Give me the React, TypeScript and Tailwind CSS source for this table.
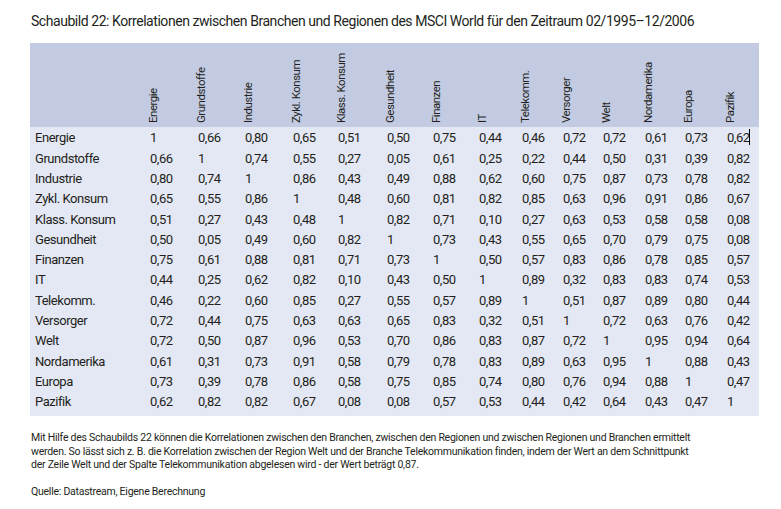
const cols = [
  "Energie",
  "Grundstoffe",
  "Industrie",
  "Zykl. Konsum",
  "Klass. Konsum",
  "Gesundheit",
  "Finanzen",
  "IT",
  "Telekomm.",
  "Versorger",
  "Welt",
  "Nordamerika",
  "Europa",
  "Pazifik",
];

const rows: Array<[string, string[]]> = [
  ["Energie", ["1", "0,66", "0,80", "0,65", "0,51", "0,50", "0,75", "0,44", "0,46", "0,72", "0,72", "0,61", "0,73", "0,62"]],
  ["Grundstoffe", ["0,66", "1", "0,74", "0,55", "0,27", "0,05", "0,61", "0,25", "0,22", "0,44", "0,50", "0,31", "0,39", "0,82"]],
  ["Industrie", ["0,80", "0,74", "1", "0,86", "0,43", "0,49", "0,88", "0,62", "0,60", "0,75", "0,87", "0,73", "0,78", "0,82"]],
  ["Zykl. Konsum", ["0,65", "0,55", "0,86", "1", "0,48", "0,60", "0,81", "0,82", "0,85", "0,63", "0,96", "0,91", "0,86", "0,67"]],
  ["Klass. Konsum", ["0,51", "0,27", "0,43", "0,48", "1", "0,82", "0,71", "0,10", "0,27", "0,63", "0,53", "0,58", "0,58", "0,08"]],
  ["Gesundheit", ["0,50", "0,05", "0,49", "0,60", "0,82", "1", "0,73", "0,43", "0,55", "0,65", "0,70", "0,79", "0,75", "0,08"]],
  ["Finanzen", ["0,75", "0,61", "0,88", "0,81", "0,71", "0,73", "1", "0,50", "0,57", "0,83", "0,86", "0,78", "0,85", "0,57"]],
  ["IT", ["0,44", "0,25", "0,62", "0,82", "0,10", "0,43", "0,50", "1", "0,89", "0,32", "0,83", "0,83", "0,74", "0,53"]],
  ["Telekomm.", ["0,46", "0,22", "0,60", "0,85", "0,27", "0,55", "0,57", "0,89", "1", "0,51", "0,87", "0,89", "0,80", "0,44"]],
  ["Versorger", ["0,72", "0,44", "0,75", "0,63", "0,63", "0,65", "0,83", "0,32", "0,51", "1", "0,72", "0,63", "0,76", "0,42"]],
  ["Welt", ["0,72", "0,50", "0,87", "0,96", "0,53", "0,70", "0,86", "0,83", "0,87", "0,72", "1", "0,95", "0,94", "0,64"]],
  ["Nordamerika", ["0,61", "0,31", "0,73", "0,91", "0,58", "0,79", "0,78", "0,83", "0,89", "0,63", "0,95", "1", "0,88", "0,43"]],
  ["Europa", ["0,73", "0,39", "0,78", "0,86", "0,58", "0,75", "0,85", "0,74", "0,80", "0,76", "0,94", "0,88", "1", "0,47"]],
  ["Pazifik", ["0,62", "0,82", "0,82", "0,67", "0,08", "0,08", "0,57", "0,53", "0,44", "0,42", "0,64", "0,43", "0,47", "1"]],
];

// column track widths measured from the scan
const grid =
  "grid grid-cols-[120px_48px_47px_48px_45px_49px_46px_46px_43px_41px_40px_42px_40px_42px_32px]";

export default function App() {
  return (
    <div
      className="h-[509px] w-[781px] overflow-hidden bg-white text-[#231f20]"
      style={{ fontFamily: "Roboto, 'Liberation Sans', sans-serif" }}
    >
      <h1 className="pl-[31px] pt-[11px] text-[14px] leading-[20px] tracking-[-0.45px]">
        Schaubild 22: Korrelationen zwischen Branchen und Regionen des MSCI World für den Zeitraum 02/1995–12/2006
      </h1>

      <div className="ml-[30px] mt-[12px] w-[729px]">
        <div className={`${grid} h-[84px] bg-[#c3cbe2]`}>
          <div />
          {cols.map((c) => (
            <div key={c} className="relative">
              <span className="absolute bottom-[4px] left-[-3px] origin-bottom-left translate-x-[13px] -rotate-90 whitespace-nowrap text-[11.5px] leading-[13px] tracking-[-0.5px]">
                {c}
              </span>
            </div>
          ))}
        </div>

        <div className="bg-[#e4e8f4] pb-[4px] pt-[1px]">
          {rows.map(([label, values], i) => (
            <div key={label} className={`${grid} h-[20.3px] items-center text-[13px] tracking-[-0.45px]`}>
              <div className="pl-[5px]">{label}</div>
              {values.map((v, j) => (
                <div key={j} className="relative">
                  {v}
                  {i === 0 && j === 13 && (
                    <span className="absolute left-[22px] top-[1px] h-[16px] w-px bg-black" />
                  )}
                </div>
              ))}
            </div>
          ))}
        </div>
      </div>

      <div className="pl-[31px] pt-[15px] text-[10.5px] leading-[13.5px] tracking-[-0.25px]">
        <p className="whitespace-nowrap">
          Mit Hilfe des Schaubilds 22 können die Korrelationen zwischen den Branchen, zwischen den Regionen und zwischen Regionen und Branchen ermittelt
          <br />
          werden. So lässt sich z. B. die Korrelation zwischen der Region Welt und der Branche Telekommunikation finden, indem der Wert an dem Schnittpunkt
          <br />
          der Zeile Welt und der Spalte Telekommunikation abgelesen wird - der Wert beträgt 0,87.
        </p>
        <p className="mt-[13px]">Quelle: Datastream, Eigene Berechnung</p>
      </div>
    </div>
  );
}
